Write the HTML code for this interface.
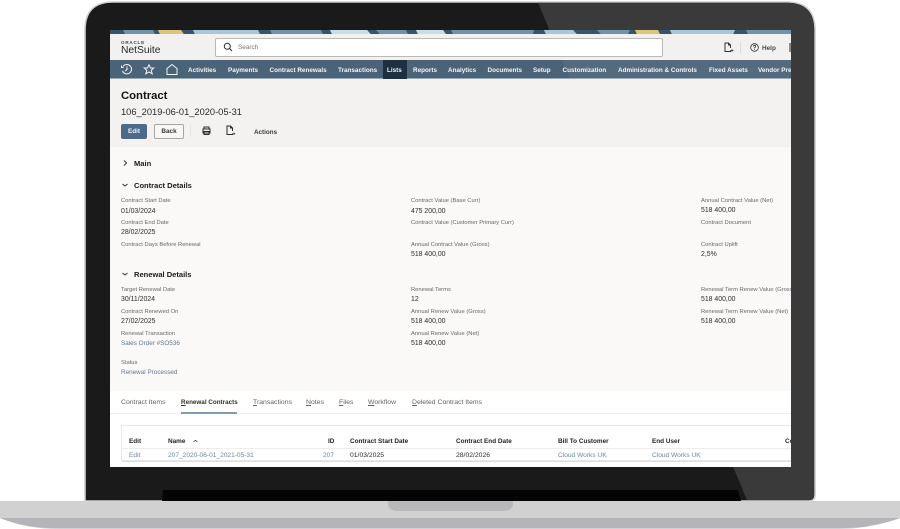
<!DOCTYPE html>
<html><head><meta charset="utf-8"><style>
html,body{margin:0;padding:0;background:#fff}
#p{position:relative;width:900px;height:529px;overflow:hidden;background:#fff;font-family:"Liberation Sans",sans-serif}
#s{position:absolute;left:110px;top:30px;width:681px;height:437px;overflow:hidden;background:#fff;filter:blur(.35px)}
#s div,#s span.t{position:absolute;white-space:nowrap}
.t{line-height:10px;height:10px;margin-top:1px}
.l{font-size:5.8px;color:#6a665f}
.v{font-size:6.9px;color:#2f2c29}
.a{font-size:6.35px;color:#62788f}
.h{font-size:7.55px;font-weight:bold;color:#1c1a18}
.n{font-size:6.35px;font-weight:bold;color:#f4f6f8;top:35px}
.tb{font-size:6.85px;color:#65615c;top:367px}
.th{font-size:6.4px;font-weight:bold;color:#26221f;top:406px}
.td{font-size:6.8px;color:#2f2c29;top:420px}
.tl{font-size:6.6px;color:#6c86a0;top:420px}
</style></head><body><div id="p">
<svg style="position:absolute;left:0;top:0" width="900" height="529">
<path d="M85 501V30Q85 2 113 2H787Q815 2 815 30V495Q815 501 809 501Z" fill="#1a1a1a" stroke="#cfcfcf" stroke-width="1.6"/>
<path d="M538 2.8H787Q814.2 2.800 814.2 30V495Q814.2 500 809 500H747Z" fill="#3a3a3a"/>
<path d="M162 501L163 490H738L741 501Z" fill="#050505"/>
<path d="M0 501H900V518Q870 529 840 529H60Q25 529 0 518Z" fill="#d1d1d1"/>
<path d="M0 518H900Q872 528 845 528H55Q25 528 0 518Z" fill="#b5b4b8"/>
<path d="M388 501H513V503Q513 511 503 511H398Q388 511 388 503Z" fill="#b9b9bb"/>
</svg>
<div id="s">
<svg style="position:absolute;left:0;top:0" width="681" height="4.300">
<rect width="681" height="4.300" fill="#6f93ad"/>
<g fill="#3a5368">
<path d="M0 0H13L15 4.300H0Z"/><path d="M43 0H48L50 4.300H45Z"/><path d="M71 0H83L85 4.300H74Z"/><path d="M148 0H160L162 4.300H150Z"/>
<path d="M211 0H220L222 4.300H213Z"/><path d="M257 0H266L270 4.300H261Z"/><path d="M296 0H306L308 4.300H298Z"/><path d="M333 0H341L343 4.300H336Z"/>
<path d="M424 0H434L436 4.300H423Z"/><path d="M463 0H487L491 4.300H467Z"/><path d="M520 0H525L527 4.300H518Z"/><path d="M548 0H560L562 4.300H550Z"/><path d="M625 0H636L638 4.300H623Z"/></g>
<g fill="#d9c676"><path d="M48 0H71L74 4.300H50Z"/><path d="M525 0H548L550 4.300H527Z"/></g>
<g fill="#a9c6d8"><path d="M83 0H148L150 4.300H85Z"/><path d="M560 0H625L623 4.300H562Z"/><path d="M434 0H463L467 4.300H436Z"/></g>
<g fill="#c9dde8"><path d="M220 0H257L261 4.300H222Z"/><path d="M306 0H333L336 4.300H308Z"/></g>
</svg>
<div style="left:0;top:4px;width:681px;height:26px;background:#f2f1ef"></div>
<div style="left:11px;top:9.500px;font-size:4.600px;letter-spacing:.75px;color:#444;line-height:6px;font-weight:bold">ORACLE</div>
<div style="left:11px;top:14px;font-size:10.300px;color:#25282b;line-height:14px">NetSuite</div>
<div style="left:105px;top:8px;width:446px;height:17px;background:#fff;border:1px solid #b9b9b9;border-radius:2px"></div>
<svg style="position:absolute;left:113px;top:12px" width="10" height="10" viewBox="0 0 10 10" fill="none" stroke="#2a2a2a" stroke-width="1"><circle cx="4.300" cy="4.300" r="3"/><path d="M6.500 6.500L9 9"/></svg>
<div class="t" style="left:128px;top:12px;font-size:6.4px;color:#77736e">Search</div>
<svg style="position:absolute;left:613px;top:12px" width="11" height="11" viewBox="0 0 11 11" fill="none" stroke="#333" stroke-width="1"><path d="M7.500 8.500V9.500H2V1H5.500L7.500 3V6M5.500 1V3H7.500"/><path d="M9 7V10M7.500 8.500H10.500" stroke-width=".7"/></svg>
<div style="left:630px;top:12px;width:1px;height:11px;background:#dcdbd9"></div>
<svg style="position:absolute;left:639px;top:12px" width="11" height="11" viewBox="0 0 11 11" fill="none" stroke="#333" stroke-width=".8"><circle cx="5.500" cy="5.500" r="3.800"/><path d="M4.300 4.500Q4.500 3.300 5.600 3.300Q6.700 3.400 6.700 4.400Q6.600 5.100 5.600 5.600V6.400M5.600 7.100V7.900"/></svg>
<div class="t" style="left:652px;top:12.500px;font-size:6.4px;font-weight:bold;color:#4a4845">Help</div>
<div style="left:679px;top:13px;width:3px;height:9px;background:#8a8a8a"></div>

<div style="left:0;top:30px;width:681px;height:19px;background:#4b6379;border-bottom:.5px solid #9aa9b6;box-sizing:border-box"></div>
<svg style="position:absolute;left:10px;top:33px" width="60" height="13" viewBox="0 0 60 13" fill="none" stroke="#f2f4f6" stroke-width="1">
<path d="M3 3.500A4.700 4.700 0 1 1 2.500 8M1.500 2.500V4.500H3.500M7 3.500V6.500L5.200 8"/>
<path d="M29 1.800L30.500 5H33.800L31.200 7.300L32.200 10.800L29 8.900L25.800 10.800L26.800 7.300L24.200 5H27.500Z"/>
<path d="M47 11.500V5.500L52 1.500L57 5.500V11.500Z"/>
</svg>
<div style="left:273px;top:30px;width:24px;height:19px;background:#1f2f42"></div>
<span class="t n" style="left:78px">Activities</span>
<span class="t n" style="left:118px">Payments</span>
<span class="t n" style="left:159.500px">Contract Renewals</span>
<span class="t n" style="left:228px">Transactions</span>
<span class="t n" style="left:277px">Lists</span>
<span class="t n" style="left:303px">Reports</span>
<span class="t n" style="left:338px">Analytics</span>
<span class="t n" style="left:377.500px">Documents</span>
<span class="t n" style="left:423px">Setup</span>
<span class="t n" style="left:452.500px">Customization</span>
<span class="t n" style="left:508px">Administration &amp; Controls</span>
<span class="t n" style="left:599px">Fixed Assets</span>
<span class="t n" style="left:648px">Vendor Pre</span>

<div style="left:0;top:49px;width:681px;height:68px;background:#f3f2f0"></div>
<div style="left:0;top:117px;width:681px;height:244px;background:#faf9f8"></div>
<div style="left:11px;top:58.500px;font-size:11.300px;font-weight:bold;color:#151311;line-height:15px">Contract</div>
<div style="left:11px;top:75.500px;font-size:9.300px;color:#2b2825;line-height:12px">106_2019-06-01_2020-05-31</div>
<div style="left:11px;top:94px;width:26px;height:14.500px;background:#4b6b88;border-radius:2px;color:#eef2f5;font-size:6.4px;font-weight:bold;line-height:15px;text-align:center">Edit</div>
<div style="left:44px;top:94px;width:28px;height:13px;border:1px solid #a8a6a2;background:#f8f7f5;border-radius:2px;color:#3d3a37;font-size:6.4px;font-weight:bold;line-height:14px;text-align:center">Back</div>
<div style="left:80px;top:95px;width:1px;height:12px;background:#e4e3e0"></div>
<svg style="position:absolute;left:91px;top:96px" width="11" height="10" viewBox="0 0 11 10" fill="none" stroke="#2b2b2b" stroke-width="1"><path d="M3 3V1H8V3M2 3H9V7H2ZM3 5.500H8V8.500H3Z"/></svg>
<svg style="position:absolute;left:115px;top:95px" width="11" height="11" viewBox="0 0 11 11" fill="none" stroke="#2b2b2b" stroke-width="1"><path d="M7.500 8.500V9.500H2V1H5.500L7.500 3V6M5.500 1V3H7.500"/><path d="M9 7.500V10M7.800 8.800H10.300" stroke-width=".7"/></svg>
<span class="t" style="left:144px;top:96.500px;font-size:6.3px;font-weight:bold;color:#3d3a37">Actions</span>

<svg style="position:absolute;left:11px;top:128px" width="10" height="10" fill="none" stroke="#333" stroke-width="1"><path d="M3 2.500L5.500 5L3 7.500"/></svg>
<span class="t h" style="left:24px;top:128px">Main</span>
<svg style="position:absolute;left:10px;top:150px" width="10" height="10" fill="none" stroke="#333" stroke-width="1"><path d="M2.500 4L5 6L7.500 4"/></svg>
<span class="t h" style="left:24px;top:150px">Contract Details</span>
<span class="t l" style="left:11px;top:165px">Contract Start Date</span>
<span class="t v" style="left:11px;top:175.500px">01/03/2024</span>
<span class="t l" style="left:11px;top:187px">Contract End Date</span>
<span class="t v" style="left:11px;top:197px">28/02/2025</span>
<span class="t l" style="left:11px;top:209px">Contract Days Before Renewal</span>
<span class="t l" style="left:301px;top:165px">Contract Value (Base Curr)</span>
<span class="t v" style="left:301px;top:175.500px">475 200,00</span>
<span class="t l" style="left:301px;top:187px">Contract Value (Customer Primary Curr)</span>
<span class="t l" style="left:301px;top:209px">Annual Contract Value (Gross)</span>
<span class="t v" style="left:301px;top:219px">518 400,00</span>
<span class="t l" style="left:591px;top:165px">Annual Contract Value (Net)</span>
<span class="t v" style="left:591px;top:175px">518 400,00</span>
<span class="t l" style="left:591px;top:187px">Contract Document</span>
<span class="t l" style="left:591px;top:209px">Contract Uplift</span>
<span class="t v" style="left:591px;top:218.500px">2,5%</span>

<svg style="position:absolute;left:10px;top:239px" width="10" height="10" fill="none" stroke="#333" stroke-width="1"><path d="M2.500 4L5 6L7.500 4"/></svg>
<span class="t h" style="left:24px;top:239px">Renewal Details</span>
<span class="t l" style="left:11px;top:253.500px">Target Renewal Date</span>
<span class="t v" style="left:11px;top:263.500px">30/11/2024</span>
<span class="t l" style="left:11px;top:275.500px">Contract Renewed On</span>
<span class="t v" style="left:11px;top:285.500px">27/02/2025</span>
<span class="t l" style="left:11px;top:297.500px">Renewal Transaction</span>
<span class="t a" style="left:11px;top:307.500px">Sales Order #SO536</span>
<span class="t l" style="left:11px;top:327px">Status</span>
<span class="t a" style="left:11px;top:337px">Renewal Processed</span>
<span class="t l" style="left:301px;top:253.500px">Renewal Terms</span>
<span class="t v" style="left:301px;top:263.500px">12</span>
<span class="t l" style="left:301px;top:275.500px">Annual Renew Value (Gross)</span>
<span class="t v" style="left:301px;top:285.500px">518 400,00</span>
<span class="t l" style="left:301px;top:297.500px">Annual Renew Value (Net)</span>
<span class="t v" style="left:301px;top:307.500px">518 400,00</span>
<span class="t l" style="left:591px;top:253.500px">Renewal Term Renew Value (Gross)</span>
<span class="t v" style="left:591px;top:263.500px">518 400,00</span>
<span class="t l" style="left:591px;top:275.500px">Renewal Term Renew Value (Net)</span>
<span class="t v" style="left:591px;top:285.500px">518 400,00</span>

<span class="t tb" style="left:11px">Contract Items</span>
<span class="t tb" style="left:71px;font-weight:bold;font-size:6.3px;color:#33302d"><u>R</u>enewal Contracts</span>
<span class="t tb" style="left:143px"><u>T</u>ransactions</span>
<span class="t tb" style="left:196px"><u>N</u>otes</span>
<span class="t tb" style="left:229px"><u>F</u>iles</span>
<span class="t tb" style="left:258px"><u>W</u>orkflow</span>
<span class="t tb" style="left:302px"><u>D</u>eleted Contract Items</span>
<div style="left:0;top:383px;width:681px;height:1px;background:#f0efed"></div>
<div style="left:71px;top:382px;width:56px;height:1.500px;background:#7f9db7"></div>

<div style="left:11px;top:395px;width:680px;height:36px;border:1px solid #e9e8e6;box-sizing:border-box"></div>
<div style="left:12px;top:418px;width:669px;height:1px;background:#eeedeb"></div>
<div style="left:12px;top:431px;width:669px;height:1px;background:#dfdedc"></div>
<span class="t th" style="left:19px">Edit</span>
<span class="t th" style="left:58px">Name</span>
<svg style="position:absolute;left:82px;top:408px" width="7" height="7" fill="none" stroke="#444" stroke-width=".8"><path d="M1.500 4L3.500 2.300L5.500 4"/></svg>
<span class="t th" style="left:218px">ID</span>
<span class="t th" style="left:240px">Contract Start Date</span>
<span class="t th" style="left:346px">Contract End Date</span>
<span class="t th" style="left:448px">Bill To Customer</span>
<span class="t th" style="left:542px">End User</span>
<span class="t th" style="left:675px">Co</span>
<span class="t tl" style="left:19px">Edit</span>
<span class="t tl" style="left:58px">207_2020-06-01_2021-05-31</span>
<span class="t tl" style="left:213px">207</span>
<span class="t td" style="left:240px">01/03/2025</span>
<span class="t td" style="left:346px">28/02/2026</span>
<span class="t tl" style="left:448px">Cloud Works UK</span>
<span class="t tl" style="left:542px">Cloud Works UK</span>
<svg style="position:absolute;left:0;top:0" width="681" height="437"><path d="M452 30H681V120H490Z" fill="#fff" opacity=".05"/></svg>
</div>
</div></body></html>
